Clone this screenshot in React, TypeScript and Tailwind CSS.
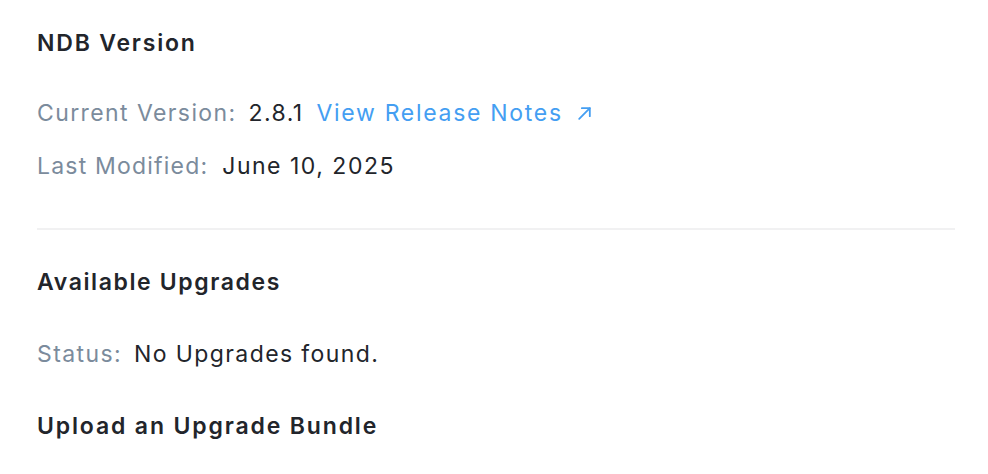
import React from "react";

function ArrowUpRight() {
  return (
    <svg width="17" height="17" viewBox="0 0 16 16" fill="none" stroke="currentColor" strokeWidth="1.7" strokeLinecap="round" strokeLinejoin="round">
      <path d="M3 13 L13 3" />
      <path d="M5.5 3 H13 V10.5" />
    </svg>
  );
}

export default function App() {
  return (
    <div className="w-[988px] h-[474px] bg-white pl-[37px] pr-[33px] pt-[28px] text-[#22252b]" style={{ fontFamily: "Inter, sans-serif" }}>
      <h2 className="h-[30px] leading-[30px] text-[23px] font-semibold tracking-[1.8px]">NDB Version</h2>
      <div className="mt-[37px] h-[36px] flex items-center text-[23px] tracking-[1.4px]">
        <span className="text-[#7b8b9c]">Current Version:</span>
        <span className="ml-[12px]">2.8.1</span>
        <a className="ml-[13px] flex items-center text-[#449ef2] tracking-[1.7px]" href="#">
          View Release Notes
          <span className="ml-[13px]"><ArrowUpRight /></span>
        </a>
      </div>
      <div className="mt-[17px] h-[36px] flex items-center text-[23px] tracking-[1.4px]">
        <span className="text-[#7b8b9c] tracking-[1.2px]">Last Modified:</span>
        <span className="ml-[14px] tracking-[1.5px]">June 10, 2025</span>
      </div>
      <div className="mt-[44px] h-[2px] bg-[#f1f1f2]" />
      <h2 className="mt-[37px] h-[30px] leading-[30px] text-[23px] font-semibold tracking-[1.6px]">Available Upgrades</h2>
      <div className="mt-[39px] h-[36px] flex items-center text-[23px] tracking-[1.4px]">
        <span className="text-[#7b8b9c]">Status:</span>
        <span className="ml-[12px]">No Upgrades found.</span>
      </div>
      <h2 className="mt-[39px] h-[30px] leading-[30px] text-[23px] font-semibold tracking-[1.85px]">Upload an Upgrade Bundle</h2>
    </div>
  );
}
